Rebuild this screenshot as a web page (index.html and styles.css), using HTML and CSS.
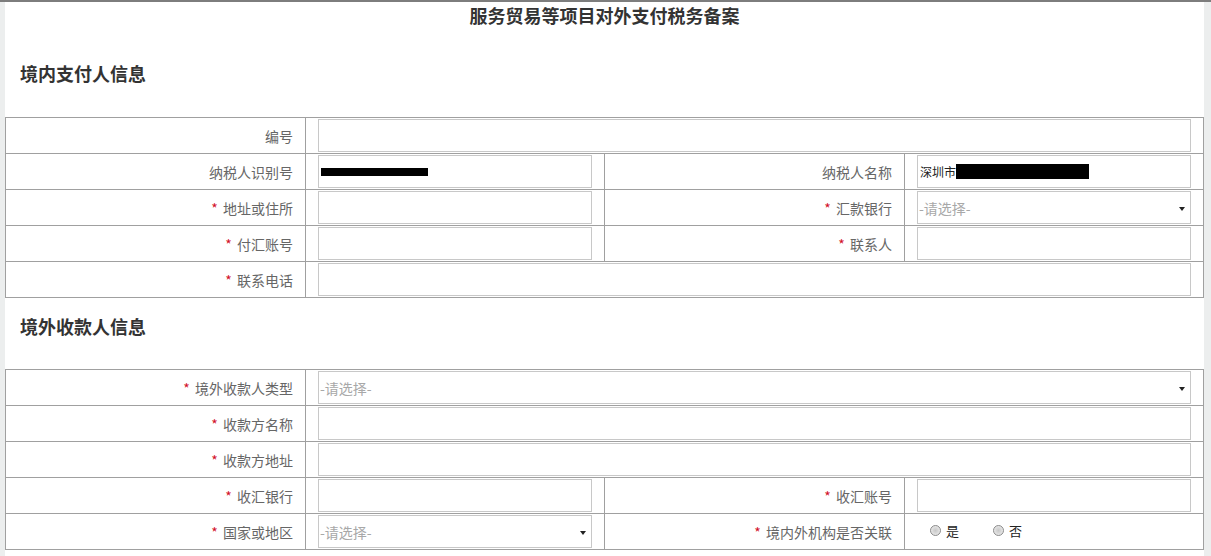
FILE: index.html
```html
<!DOCTYPE html>
<html lang="zh-CN">
<head>
    <meta charset="UTF-8">
    <title>服务贸易等项目对外支付税务备案</title>
    <link rel="stylesheet" href="styles.css">
</head>
<body>
    <div class="page">
        <div class="title">服务贸易等项目对外支付税务备案</div>

        <!-- 境内支付人 -->
        <div class="section-title">境内支付人信息</div>
        <table class="form-table">
            <colgroup>
                <col class="c-label"><col class="c-input"><col class="c-label"><col class="c-input">
            </colgroup>
            <tr>
                <td class="label">编号</td>
                <td colspan="3" class="cell"><input type="text" class="txt"></td>
            </tr>
            <tr>
                <td class="label">纳税人识别号</td>
                <td class="cell"><div class="txt filled"><span class="mask mask-id"></span></div></td>
                <td class="label">纳税人名称</td>
                <td class="cell"><div class="txt filled">深圳市<span class="mask mask-name"></span></div></td>
            </tr>
            <tr>
                <td class="label"><span class="req">*</span> 地址或住所</td>
                <td class="cell"><input type="text" class="txt"></td>
                <td class="label"><span class="req">*</span> 汇款银行</td>
                <td class="cell"><div class="txt select">-请选择-<span class="arrow"></span></div></td>
            </tr>
            <tr>
                <td class="label"><span class="req">*</span> 付汇账号</td>
                <td class="cell"><input type="text" class="txt"></td>
                <td class="label"><span class="req">*</span> 联系人</td>
                <td class="cell"><input type="text" class="txt"></td>
            </tr>
            <tr>
                <td class="label"><span class="req">*</span> 联系电话</td>
                <td colspan="3" class="cell"><input type="text" class="txt"></td>
            </tr>
        </table>

        <!-- 境外收款人 -->
        <div class="section-title second">境外收款人信息</div>
        <table class="form-table">
            <colgroup>
                <col class="c-label"><col class="c-input"><col class="c-label"><col class="c-input">
            </colgroup>
            <tr>
                <td class="label"><span class="req">*</span> 境外收款人类型</td>
                <td colspan="3" class="cell"><div class="txt select">-请选择-<span class="arrow"></span></div></td>
            </tr>
            <tr>
                <td class="label"><span class="req">*</span> 收款方名称</td>
                <td colspan="3" class="cell"><input type="text" class="txt"></td>
            </tr>
            <tr>
                <td class="label"><span class="req">*</span> 收款方地址</td>
                <td colspan="3" class="cell"><input type="text" class="txt"></td>
            </tr>
            <tr>
                <td class="label"><span class="req">*</span> 收汇银行</td>
                <td class="cell"><input type="text" class="txt"></td>
                <td class="label"><span class="req">*</span> 收汇账号</td>
                <td class="cell"><input type="text" class="txt"></td>
            </tr>
            <tr>
                <td class="label"><span class="req">*</span> 国家或地区</td>
                <td class="cell"><div class="txt select">-请选择-<span class="arrow"></span></div></td>
                <td class="label"><span class="req">*</span> 境内外机构是否关联</td>
                <td class="cell">
                    <div class="radios">
                        <label class="radio"><span class="dot"></span>是</label>
                        <label class="radio"><span class="dot"></span>否</label>
                    </div>
                </td>
            </tr>
        </table>
    </div>
</body>
</html>
```

FILE: styles.css
```css
* {
    box-sizing: border-box;
}

body {
    margin: 0;
    padding: 0;
    background-color: #eceeee;
    border-top: 2px solid #7d7d7d;
    font-family: "Noto Sans CJK SC", "Noto Sans", sans-serif;
    color: #333;
}

.page {
    background: #fff;
    margin-left: 5px;
    width: 1199px;
    min-height: 554px;
}

/* 标题 */
.title {
    text-align: center;
    font-size: 18px;
    font-weight: bold;
    line-height: 26px;
    padding-bottom: 17px;
    color: #333;
}

.section-title {
    font-size: 18px;
    font-weight: bold;
    line-height: 24px;
    padding: 16px 0 32px 15px;
    color: #333;
}

.section-title.second {
    padding: 16px 0 31px 15px;
}

/* 表格 */
.form-table {
    width: 1199px;
    border-collapse: collapse;
    table-layout: fixed;
}

.c-label { width: 300px; }
.c-input { width: 299px; }

.form-table td {
    border: 1px solid #a0a0a0;
    padding: 1px 12px;
    vertical-align: middle;
}

.label {
    text-align: right;
    font-size: 14px;
    color: #666;
    white-space: nowrap;
    padding-bottom: 3px;
}

.req {
    color: #d2102a;
    margin-right: 2px;
}

.txt {
    display: block;
    width: 100%;
    height: 33px;
    margin: 0;
    border: 1px solid #c8c8c8;
    background: #fff;
    padding: 0 2px;
    font-family: inherit;
    font-size: 13px;
    outline: none;
}

.filled {
    display: flex;
    align-items: center;
    color: #222;
    font-size: 12px;
}

.mask {
    display: inline-block;
    background: #000;
}

.mask-id {
    width: 107px;
    height: 8px;
}

.mask-name {
    width: 133px;
    height: 15px;
}

.select {
    position: relative;
    display: flex;
    align-items: center;
    font-size: 14px;
    color: #a8a8a8;
    padding-left: 1px;
}

.select .arrow {
    position: absolute;
    right: 5px;
    top: 15px;
    width: 0;
    height: 0;
    border-left: 3px solid transparent;
    border-right: 3px solid transparent;
    border-top: 4px solid #222;
}

/* 单选 */
.radios {
    display: flex;
    align-items: center;
    height: 33px;
    padding-left: 13px;
    padding-bottom: 3px;
    gap: 34px;
}

.radio {
    display: flex;
    align-items: center;
    font-size: 13px;
    color: #222;
}

.dot {
    display: inline-block;
    width: 11px;
    height: 11px;
    border-radius: 50%;
    border: 1px solid #8c8c8c;
    background: radial-gradient(circle at 50% 50%, #c8c8c8 0, #d8d8d8 40%, #f4f4f4 100%);
    margin-right: 5px;
}
```
